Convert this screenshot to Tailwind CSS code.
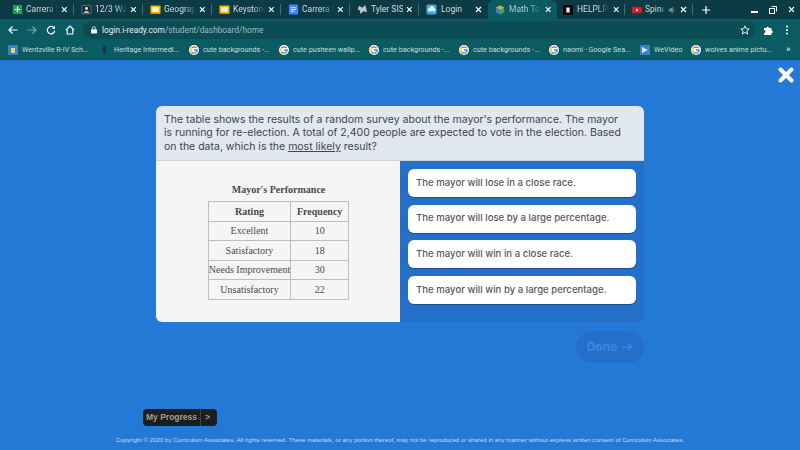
<!DOCTYPE html>
<html lang="en">
<head>
<meta charset="UTF-8" />
<title>i-Ready</title>
<script src="https://cdn.jsdelivr.net/npm/@tailwindcss/browser@4"></script>
</head>
<body class="w-[800px] h-[450px] overflow-hidden bg-[#2478d6] font-['Roboto',sans-serif]">

<!-- tab strip -->
<div class="h-[19px] bg-[#0c3b45] flex pl-[5px] text-[8.5px] text-[#cfdcdd] items-center">
  <div class="relative w-[69px] h-full flex items-center pl-[7px] pr-[6px] gap-[3px] after:absolute after:right-0 after:top-[4px] after:h-[11px] after:w-px after:bg-[#47696e]">
    <svg class="w-[11px] h-[11px] shrink-0" viewBox="0 0 12 12"><rect x="1" y="1" width="10" height="10" rx="1" fill="#1e9e5a"/><path d="M6 3v6M3 6h6" stroke="#fff" stroke-width="1.3"/></svg>
    <span class="w-[34px] overflow-hidden whitespace-nowrap [mask-image:linear-gradient(to_right,black_65%,transparent)]">Carrera St</span>
    <svg class="ml-auto w-[7px] h-[7px]" viewBox="0 0 7 7"><path d="M1 1l5 5M6 1L1 6" stroke="#fff" stroke-width="1.200"/></svg>
  </div>
  <div class="relative w-[69px] h-full flex items-center pl-[7px] pr-[6px] gap-[3px] after:absolute after:right-0 after:top-[4px] after:h-[11px] after:w-px after:bg-[#47696e]">
    <svg class="w-[11px] h-[11px] shrink-0" viewBox="0 0 12 12"><rect x="1" y="1.500" width="10" height="9" rx="1" fill="#20262b" stroke="#9aa" stroke-width=".6"/><circle cx="6" cy="5" r="1.600" fill="#eee"/><path d="M3 9.500c.6-2 5.400-2 6 0z" fill="#eee"/></svg>
    <span class="w-[34px] overflow-hidden whitespace-nowrap [mask-image:linear-gradient(to_right,black_65%,transparent)]">12/3 Wat</span>
    <svg class="ml-auto w-[7px] h-[7px]" viewBox="0 0 7 7"><path d="M1 1l5 5M6 1L1 6" stroke="#fff" stroke-width="1.200"/></svg>
  </div>
  <div class="relative w-[69px] h-full flex items-center pl-[7px] pr-[6px] gap-[3px] after:absolute after:right-0 after:top-[4px] after:h-[11px] after:w-px after:bg-[#47696e]">
    <svg class="w-[11px] h-[11px] shrink-0" viewBox="0 0 12 12"><rect x=".5" y="1.500" width="11" height="9" rx="1" fill="#f4b400"/><rect x="2.500" y="3.500" width="7" height="5" fill="#fdf3cf"/></svg>
    <span class="w-[34px] overflow-hidden whitespace-nowrap [mask-image:linear-gradient(to_right,black_65%,transparent)]">Geograph</span>
    <svg class="ml-auto w-[7px] h-[7px]" viewBox="0 0 7 7"><path d="M1 1l5 5M6 1L1 6" stroke="#fff" stroke-width="1.200"/></svg>
  </div>
  <div class="relative w-[69px] h-full flex items-center pl-[7px] pr-[6px] gap-[3px] after:absolute after:right-0 after:top-[4px] after:h-[11px] after:w-px after:bg-[#47696e]">
    <svg class="w-[11px] h-[11px] shrink-0" viewBox="0 0 12 12"><rect x=".5" y="1.500" width="11" height="9" rx="1" fill="#f4b400"/><rect x="2.500" y="3.500" width="7" height="5" fill="#fdf3cf"/></svg>
    <span class="w-[34px] overflow-hidden whitespace-nowrap [mask-image:linear-gradient(to_right,black_65%,transparent)]">Keystone</span>
    <svg class="ml-auto w-[7px] h-[7px]" viewBox="0 0 7 7"><path d="M1 1l5 5M6 1L1 6" stroke="#fff" stroke-width="1.200"/></svg>
  </div>
  <div class="relative w-[69px] h-full flex items-center pl-[7px] pr-[6px] gap-[3px] after:absolute after:right-0 after:top-[4px] after:h-[11px] after:w-px after:bg-[#47696e]">
    <svg class="w-[11px] h-[11px] shrink-0" viewBox="0 0 12 12"><rect x="1" y=".5" width="10" height="11" rx="1" fill="#4285f4"/><path d="M3 4h6M3 6h6M3 8h4" stroke="#fff" stroke-width=".9"/></svg>
    <span class="w-[34px] overflow-hidden whitespace-nowrap [mask-image:linear-gradient(to_right,black_65%,transparent)]">Carrera St</span>
    <svg class="ml-auto w-[7px] h-[7px]" viewBox="0 0 7 7"><path d="M1 1l5 5M6 1L1 6" stroke="#fff" stroke-width="1.200"/></svg>
  </div>
  <div class="relative w-[69px] h-full flex items-center pl-[7px] pr-[6px] gap-[3px] after:absolute after:right-0 after:top-[4px] after:h-[11px] after:w-px after:bg-[#47696e]">
    <svg class="w-[11px] h-[11px] shrink-0" viewBox="0 0 12 12"><path d="M2 2l4 2 3-3 1 4 1 4-4-1-3 3-1-4-2-1z" fill="#b9c6c8"/></svg>
    <span class="w-[34px] overflow-hidden whitespace-nowrap">Tyler SIS</span>
    <svg class="ml-auto w-[7px] h-[7px]" viewBox="0 0 7 7"><path d="M1 1l5 5M6 1L1 6" stroke="#fff" stroke-width="1.200"/></svg>
  </div>
  <div class="w-[69px] h-full flex items-center pl-[7px] pr-[6px] gap-[4px]">
    <svg class="w-[11px] h-[11px] shrink-0" viewBox="0 0 12 12"><rect x=".5" y=".5" width="11" height="11" rx="2" fill="#4aa8d8"/><path d="M3 8h6a1.500 1.500 0 0 0 0-3 2.500 2.500 0 0 0-5-.4A1.800 1.800 0 0 0 3 8z" fill="#e8f5fb"/></svg>
    <span class="overflow-hidden whitespace-nowrap">Login</span>
    <svg class="ml-auto w-[7px] h-[7px]" viewBox="0 0 7 7"><path d="M1 1l5 5M6 1L1 6" stroke="#fff" stroke-width="1.200"/></svg>
  </div>
  <div class="w-[69px] h-full flex items-center pl-[7px] pr-[6px] gap-[4px] bg-[#0a5b62] rounded-t-[6px]">
    <svg class="w-[10px] h-[10px] shrink-0" viewBox="0 0 12 12"><path d="M6 .5L11 3v6L6 11.500z" fill="#3aa655"/><path d="M6 .5L1 3l5 3 5-3z" fill="#e8a33d"/><path d="M1 3v6l5 2.500V6z" fill="#3f7fd0"/></svg>
    <span class="w-[34px] overflow-hidden whitespace-nowrap text-[#a9cbcd] [mask-image:linear-gradient(to_right,black_65%,transparent)]">Math To D</span>
    <svg class="ml-auto w-[7px] h-[7px]" viewBox="0 0 7 7"><path d="M1 1l5 5M6 1L1 6" stroke="#fff" stroke-width="1.200"/></svg>
  </div>
  <div class="relative w-[68px] h-full flex items-center pl-[6px] pr-[6px] gap-[4px] after:absolute after:right-0 after:top-[4px] after:h-[11px] after:w-px after:bg-[#47696e]">
    <svg class="w-[10px] h-[10px] shrink-0" viewBox="0 0 12 12"><rect width="12" height="12" rx="1" fill="#0b0b0b"/><path d="M4 3h4v6H4z" fill="#eee"/></svg>
    <span class="w-[34px] overflow-hidden whitespace-nowrap [mask-image:linear-gradient(to_right,black_65%,transparent)]">HELPLPLP</span>
    <svg class="ml-auto w-[7px] h-[7px]" viewBox="0 0 7 7"><path d="M1 1l5 5M6 1L1 6" stroke="#fff" stroke-width="1.200"/></svg>
  </div>
  <div class="relative w-[68px] h-full flex items-center pl-[7px] pr-[6px] gap-[3px] after:absolute after:right-0 after:top-[4px] after:h-[11px] after:w-px after:bg-[#47696e]">
    <svg class="w-[10px] h-[10px] shrink-0" viewBox="0 0 12 12"><rect y="2" width="12" height="8" rx="2" fill="#e01b24"/><path d="M5 4.200L8 6 5 7.800z" fill="#fff"/></svg>
    <span class="w-[20px] overflow-hidden whitespace-nowrap [mask-image:linear-gradient(to_right,black_75%,transparent)]">Spine</span>
    <svg class="w-[8px] h-[8px] opacity-50 shrink-0" viewBox="0 0 10 10"><path d="M1 3.500h2L6 1v8L3 6.500H1z" fill="#dfe8e8"/><path d="M7.500 3.500v3" stroke="#dfe8e8"/></svg>
    <svg class="ml-auto w-[7px] h-[7px]" viewBox="0 0 7 7"><path d="M1 1l5 5M6 1L1 6" stroke="#fff" stroke-width="1.200"/></svg>
  </div>
  <svg class="w-[8px] h-[8px] ml-[9px]" viewBox="0 0 8 8"><path d="M4 0v8M0 4h8" stroke="#fff" stroke-width="1.200"/></svg>
  <div class="ml-auto flex items-center gap-[11px] pr-[5px]">
    <span class="block w-[7px] h-[1.500px] bg-white mt-[5px]"></span>
    <svg class="w-[8px] h-[8px]" viewBox="0 0 8 8"><rect x=".5" y="2.500" width="5" height="5" fill="none" stroke="#fff"/><path d="M2.500 .5h5v5" fill="none" stroke="#fff"/></svg>
    <svg class="w-[7px] h-[7px]" viewBox="0 0 7 7"><path d="M1 1l5 5M6 1L1 6" stroke="#fff" stroke-width="1.100"/></svg>
  </div>
</div>

<!-- address bar -->
<div class="h-[22px] bg-[#0a5b62] flex items-center pl-[8px] text-[#e6eeee]">
  <svg class="w-[10px] h-[10px]" viewBox="0 0 10 10"><path d="M9.500 5H1M4.500 1.500L1 5l3.500 3.500" fill="none" stroke="#fff" stroke-width="1.200"/></svg>
  <svg class="w-[10px] h-[10px] ml-[9px]" viewBox="0 0 10 10"><path d="M.5 5H9M5.500 1.500L9 5 5.500 8.500" fill="none" stroke="#7ea5a8" stroke-width="1.200"/></svg>
  <svg class="w-[10px] h-[10px] ml-[9px]" viewBox="0 0 10 10"><path d="M8.300 3.400A3.700 3.700 0 1 0 8.700 5.600" fill="none" stroke="#fff" stroke-width="1.200"/><path d="M9 .8v3H6z" fill="#fff"/></svg>
  <svg class="w-[10px] h-[10px] ml-[9px]" viewBox="0 0 10 10"><path d="M1 5l4-4 4 4M2.200 4.500V9h5.600V4.500" fill="none" stroke="#fff" stroke-width="1.100"/></svg>
  <div class="ml-[8px] w-[672px] h-[18px] rounded-full bg-[#0c4c55] flex items-center pl-[8px] pr-[5px] text-[8.300px]">
    <svg class="w-[6px] h-[8px] mr-[5px]" viewBox="0 0 7 8"><rect y="3" width="7" height="5" rx="1" fill="#fff"/><path d="M1.700 3V2a1.800 1.800 0 0 1 3.600 0v1" fill="none" stroke="#fff" stroke-width=".9"/></svg>
    <span>login.i-ready.com<span class="text-[#9fbcbf]">/student/dashboard/home</span></span>
    <svg class="ml-auto w-[10px] h-[10px]" viewBox="0 0 10 10"><path d="M5 .9l1.200 2.800 3 .3-2.300 2 .7 3L5 7.400 2.400 9l.7-3L.8 4l3-.3z" fill="none" stroke="#fff" stroke-width=".9"/></svg>
  </div>
  <svg class="ml-[8px] w-[10px] h-[10px]" viewBox="0 0 10 10"><path d="M1 3h2.400a1.300 1.300 0 0 1 2.600 0h2.500v2.400a1.300 1.300 0 0 1 0 2.600V10H1V8a1.500 1.500 0 0 0 0-3z" fill="#fff"/></svg>
  <svg class="ml-[13px] w-[2px] h-[10px]" viewBox="0 0 2 10"><circle cx="1" cy="1.500" r="1" fill="#fff"/><circle cx="1" cy="5" r="1" fill="#fff"/><circle cx="1" cy="8.500" r="1" fill="#fff"/></svg>
</div>

<!-- bookmarks -->
<div class="h-[19px] bg-[#0a5b62] flex items-center pl-[8px] text-[7.200px] text-[#d0dedf] border-b border-[#0a4f56] whitespace-nowrap">
  <div class="w-[92px] flex items-center gap-[4px]">
    <svg class="w-[10px] h-[10px]" viewBox="0 0 10 10"><rect width="10" height="10" rx="1" fill="#3f7fd0"/><rect x="3" y="3" width="4" height="5" fill="#f1d35c"/></svg>
    <span>Wentzville R-IV Sch...</span>
  </div>
  <div class="w-[89px] flex items-center gap-[5px]">
    <svg class="w-[9px] h-[10px]" viewBox="0 0 9 10"><path d="M3 1h3v6a1.500 1.500 0 0 1-3 0z" fill="#13306b"/></svg>
    <span>Heritage Intermedi...</span>
  </div>
  <div class="w-[90px] flex items-center gap-[4px]">
    <svg class="w-[10px] h-[10px]" viewBox="0 0 10 10"><circle cx="5" cy="5" r="5" fill="#fff"/><path d="M7.600 3.200A3.200 3.200 0 0 0 2.400 3.200" fill="none" stroke="#ea4335" stroke-width="1.300"/><path d="M2.400 3.200a3.200 3.200 0 0 0 0 3.600" fill="none" stroke="#fbbc05" stroke-width="1.300"/><path d="M2.400 6.800a3.200 3.200 0 0 0 5 .2" fill="none" stroke="#34a853" stroke-width="1.300"/><path d="M7.400 7A3.200 3.200 0 0 0 8.200 5H5" fill="none" stroke="#4285f4" stroke-width="1.300"/></svg>
    <span>cute backgrounds -...</span>
  </div>
  <div class="w-[90px] flex items-center gap-[4px]">
    <svg class="w-[10px] h-[10px]" viewBox="0 0 10 10"><circle cx="5" cy="5" r="5" fill="#fff"/><path d="M7.600 3.200A3.200 3.200 0 0 0 2.400 3.200" fill="none" stroke="#ea4335" stroke-width="1.300"/><path d="M2.400 3.200a3.200 3.200 0 0 0 0 3.600" fill="none" stroke="#fbbc05" stroke-width="1.300"/><path d="M2.400 6.800a3.200 3.200 0 0 0 5 .2" fill="none" stroke="#34a853" stroke-width="1.300"/><path d="M7.400 7A3.200 3.200 0 0 0 8.200 5H5" fill="none" stroke="#4285f4" stroke-width="1.300"/></svg>
    <span>cute pusheen wallp...</span>
  </div>
  <div class="w-[90px] flex items-center gap-[4px]">
    <svg class="w-[10px] h-[10px]" viewBox="0 0 10 10"><circle cx="5" cy="5" r="5" fill="#fff"/><path d="M7.600 3.200A3.200 3.200 0 0 0 2.400 3.200" fill="none" stroke="#ea4335" stroke-width="1.300"/><path d="M2.400 3.200a3.200 3.200 0 0 0 0 3.600" fill="none" stroke="#fbbc05" stroke-width="1.300"/><path d="M2.400 6.800a3.200 3.200 0 0 0 5 .2" fill="none" stroke="#34a853" stroke-width="1.300"/><path d="M7.400 7A3.200 3.200 0 0 0 8.200 5H5" fill="none" stroke="#4285f4" stroke-width="1.300"/></svg>
    <span>cute backgrounds -...</span>
  </div>
  <div class="w-[90px] flex items-center gap-[4px]">
    <svg class="w-[10px] h-[10px]" viewBox="0 0 10 10"><circle cx="5" cy="5" r="5" fill="#fff"/><path d="M7.600 3.200A3.200 3.200 0 0 0 2.400 3.200" fill="none" stroke="#ea4335" stroke-width="1.300"/><path d="M2.400 3.200a3.200 3.200 0 0 0 0 3.600" fill="none" stroke="#fbbc05" stroke-width="1.300"/><path d="M2.400 6.800a3.200 3.200 0 0 0 5 .2" fill="none" stroke="#34a853" stroke-width="1.300"/><path d="M7.400 7A3.200 3.200 0 0 0 8.200 5H5" fill="none" stroke="#4285f4" stroke-width="1.300"/></svg>
    <span>cute backgrounds -...</span>
  </div>
  <div class="w-[91px] flex items-center gap-[4px]">
    <svg class="w-[10px] h-[10px]" viewBox="0 0 10 10"><circle cx="5" cy="5" r="5" fill="#fff"/><path d="M7.600 3.200A3.200 3.200 0 0 0 2.400 3.200" fill="none" stroke="#ea4335" stroke-width="1.300"/><path d="M2.400 3.200a3.200 3.200 0 0 0 0 3.600" fill="none" stroke="#fbbc05" stroke-width="1.300"/><path d="M2.400 6.800a3.200 3.200 0 0 0 5 .2" fill="none" stroke="#34a853" stroke-width="1.300"/><path d="M7.400 7A3.200 3.200 0 0 0 8.200 5H5" fill="none" stroke="#4285f4" stroke-width="1.300"/></svg>
    <span>naomi - Google Sea...</span>
  </div>
  <div class="w-[51px] flex items-center gap-[4px]">
    <svg class="w-[10px] h-[10px]" viewBox="0 0 10 10"><rect width="10" height="10" fill="#3f7fd0"/><path d="M2 2l6 3-6 3z" fill="#dfeaf7"/></svg>
    <span>WeVideo</span>
  </div>
  <div class="w-[95px] flex items-center gap-[4px]">
    <svg class="w-[10px] h-[10px]" viewBox="0 0 10 10"><circle cx="5" cy="5" r="5" fill="#fff"/><path d="M7.600 3.200A3.200 3.200 0 0 0 2.400 3.200" fill="none" stroke="#ea4335" stroke-width="1.300"/><path d="M2.400 3.200a3.200 3.200 0 0 0 0 3.600" fill="none" stroke="#fbbc05" stroke-width="1.300"/><path d="M2.400 6.800a3.200 3.200 0 0 0 5 .2" fill="none" stroke="#34a853" stroke-width="1.300"/><path d="M7.400 7A3.200 3.200 0 0 0 8.200 5H5" fill="none" stroke="#4285f4" stroke-width="1.300"/></svg>
    <span>wolves anime pictu...</span>
  </div>
  <span class="text-[9px] font-bold">»</span>
</div>

<!-- page -->
<div class="relative h-[390px] flex flex-col items-center">
  <svg class="absolute right-[6px] top-[7px] w-[16px] h-[16px]" viewBox="0 0 16 16"><path d="M2.500 2.500l11 11M13.500 2.500l-11 11" stroke="#fff" stroke-width="4" stroke-linecap="round"/></svg>

  <div class="mt-[46px] w-[488px] h-[216px] rounded-[6px] overflow-hidden flex flex-col">
    <div class="h-[55px] bg-[#e1e8f2] border-b border-[#c9d3de] pl-[8px] pt-[7px] font-['Inter',sans-serif] text-[10.500px] leading-[13.400px] text-[#3f444a]">
      <p class="whitespace-nowrap">The table shows the results of a random survey about the mayor's performance. The mayor</p>
      <p class="whitespace-nowrap">is running for re-election. A total of 2,400 people are expected to vote in the election. Based</p>
      <p class="whitespace-nowrap">on the data, which is the <span class="underline">most likely</span> result?</p>
    </div>
    <div class="flex-1 flex">
      <div class="w-[244px] bg-[#f5f5f6] pt-[22px] pl-[1px] flex flex-col items-center font-['Liberation_Serif',serif] text-[10px] text-[#4a4a4a]">
        <p class="font-bold mb-[5px] leading-[13px]">Mayor's Performance</p>
        <table class="border-collapse border border-[#bdbdbd] text-center leading-[18px]">
          <tr class="h-[20px]">
            <th class="w-[82px] border border-[#bdbdbd] font-bold">Rating</th>
            <th class="w-[58px] border border-[#bdbdbd] font-bold">Frequency</th>
          </tr>
          <tr class="h-[19px]"><td class="border border-[#bdbdbd]">Excellent</td><td class="border border-[#bdbdbd]">10</td></tr>
          <tr class="h-[20px]"><td class="border border-[#bdbdbd]">Satisfactory</td><td class="border border-[#bdbdbd]">18</td></tr>
          <tr class="h-[19px]"><td class="border border-[#bdbdbd] whitespace-nowrap">Needs Improvement</td><td class="border border-[#bdbdbd]">30</td></tr>
          <tr class="h-[20px]"><td class="border border-[#bdbdbd]">Unsatisfactory</td><td class="border border-[#bdbdbd]">22</td></tr>
        </table>
      </div>
      <div class="flex-1 bg-[#2470c8] pt-[8px] px-[8px] flex flex-col gap-[7.700px] font-['Inter',sans-serif] font-medium text-[9.600px] text-[#55595e]">
        <div class="h-[28px] bg-white rounded-[6px] shadow-[0_1px_1px_#1b4f8f] flex items-center pl-[8px]">The mayor will lose in a close race.</div>
        <div class="h-[28px] bg-white rounded-[6px] shadow-[0_1px_1px_#1b4f8f] flex items-center pl-[8px]">The mayor will lose by a large percentage.</div>
        <div class="h-[28px] bg-white rounded-[6px] shadow-[0_1px_1px_#1b4f8f] flex items-center pl-[8px]">The mayor will win in a close race.</div>
        <div class="h-[28px] bg-white rounded-[6px] shadow-[0_1px_1px_#1b4f8f] flex items-center pl-[8px]">The mayor will win by a large percentage.</div>
      </div>
    </div>
  </div>

  <div class="mt-[9px] ml-[420px] w-[68px] h-[32px] rounded-full bg-[#2470c8] flex items-center justify-center gap-[5px] font-['Inter',sans-serif] font-bold text-[12px] text-[#3d88dc]">
    <span>Done</span>
    <svg class="w-[11px] h-[10px]" viewBox="0 0 11 10"><path d="M.5 5h9M6 1.500L9.500 5 6 8.500" fill="none" stroke="#3d88dc" stroke-width="1.600"/></svg>
  </div>

  <div class="self-start ml-[143px] mt-[46px] w-[74px] h-[17px] bg-[#1c1d20] rounded-[4px] flex items-center text-[8.500px] font-bold text-[#a39f95] font-['Liberation_Sans',sans-serif]">
    <span class="w-[58px] pl-[3px] border-r border-[#444] leading-[17px] whitespace-nowrap">My Progress</span>
    <span class="pl-[4px]">&gt;</span>
  </div>

  <p class="mt-[9px] text-[6.100px] leading-[10px] text-[#c5def8] font-['Liberation_Sans',sans-serif] whitespace-nowrap">Copyright © 2020 by Curriculum Associates. All rights reserved. These materials, or any portion thereof, may not be reproduced or shared in any manner without express written consent of Curriculum Associates.</p>
</div>
</body>
</html>
